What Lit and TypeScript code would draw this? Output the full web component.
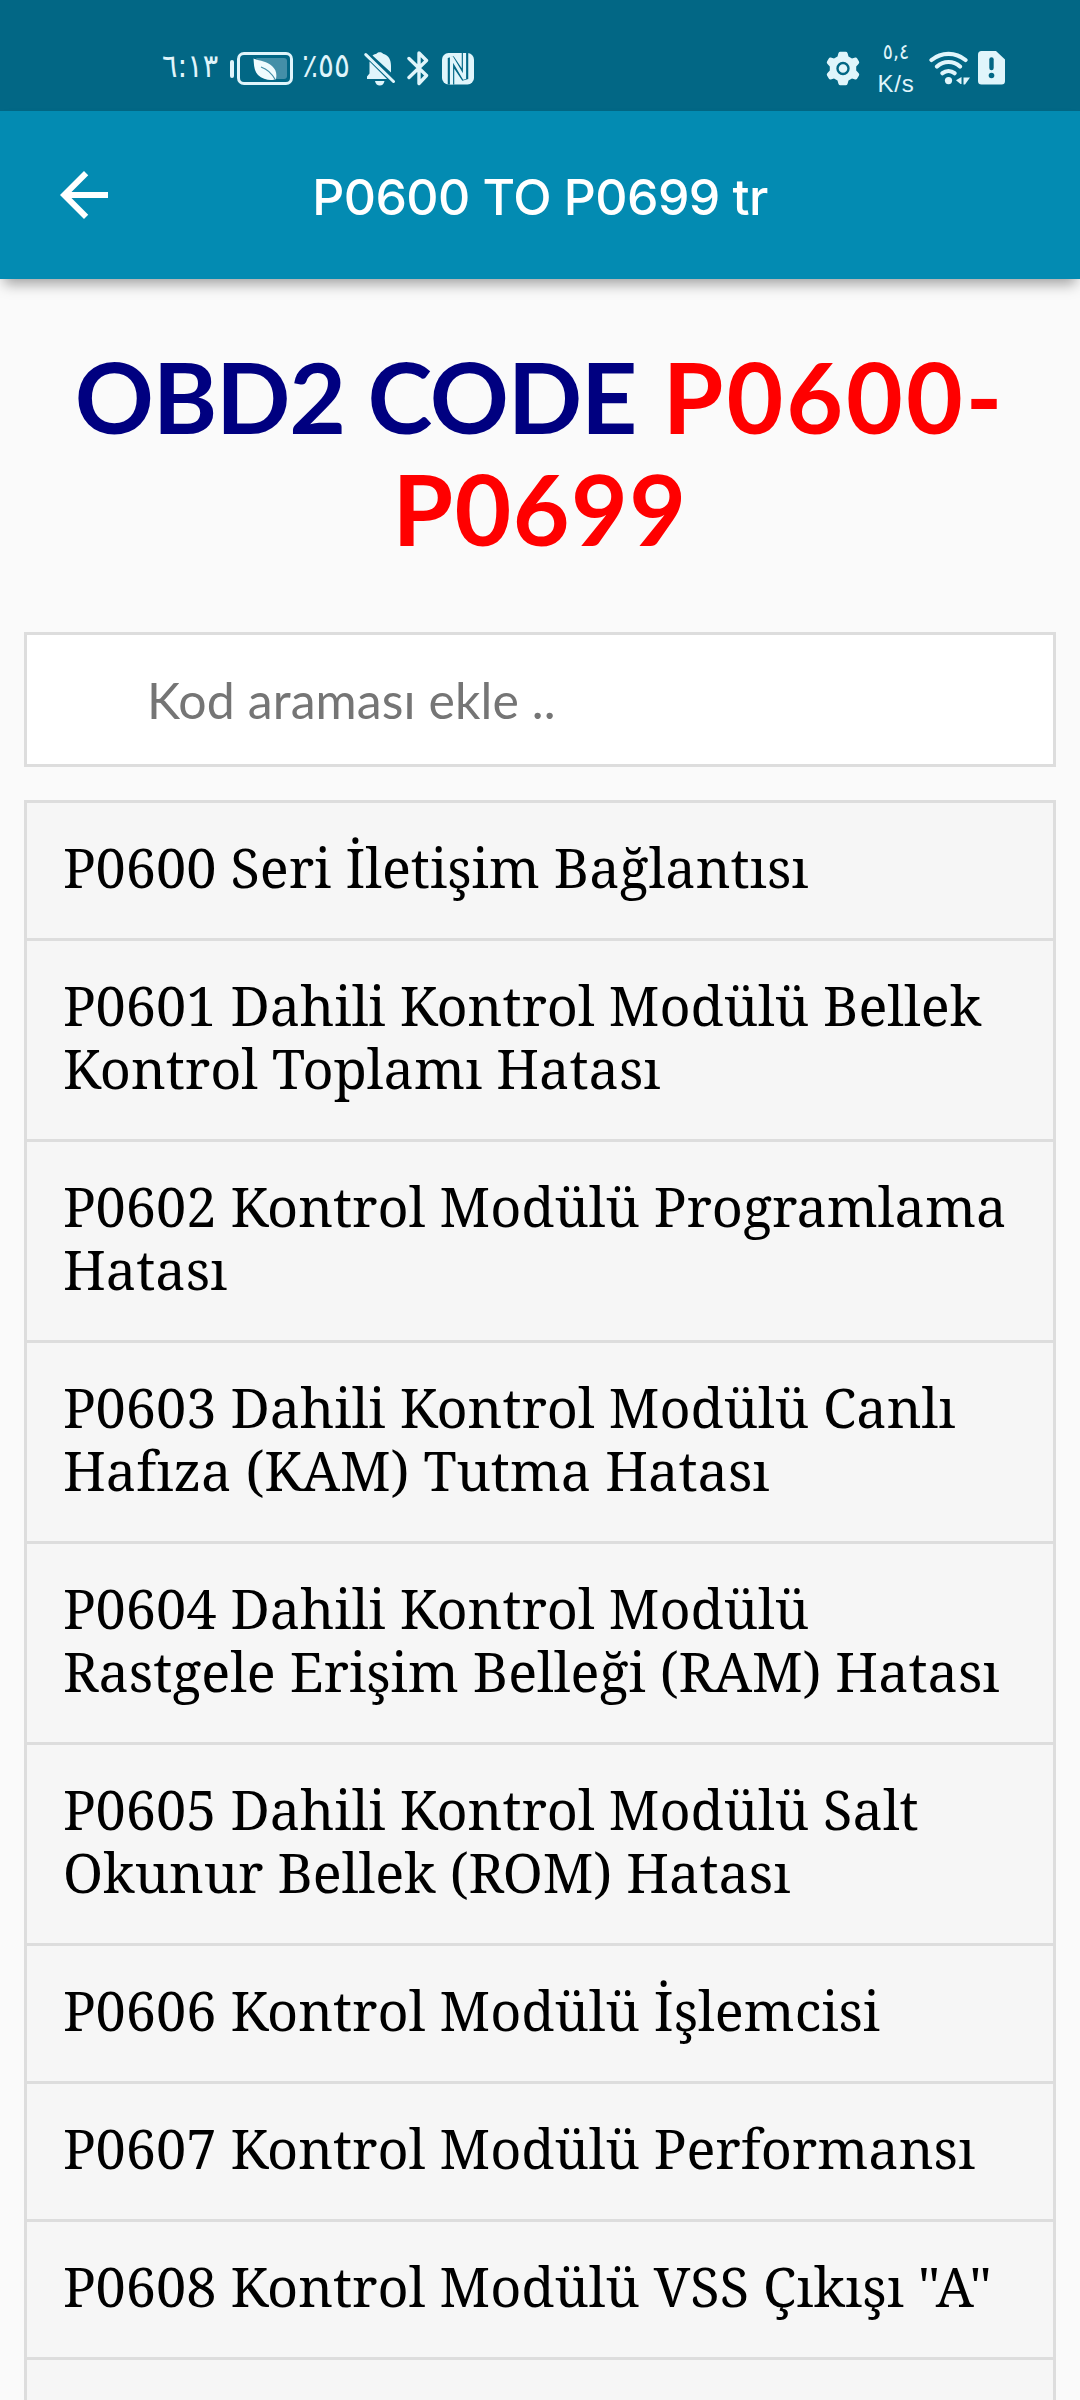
import { LitElement, html, css, svg } from "lit";
import { customElement } from "lit/decorators.js";

const codes: string[] = [
  "P0600 Seri İletişim Bağlantısı",
  "P0601 Dahili Kontrol Modülü Bellek Kontrol Toplamı Hatası",
  "P0602 Kontrol Modülü Programlama Hatası",
  "P0603 Dahili Kontrol Modülü Canlı Hafıza (KAM) Tutma Hatası",
  "P0604 Dahili Kontrol Modülü Rastgele Erişim Belleği (RAM) Hatası",
  "P0605 Dahili Kontrol Modülü Salt Okunur Bellek (ROM) Hatası",
  "P0606 Kontrol Modülü İşlemcisi",
  "P0607 Kontrol Modülü Performansı",
  "P0608 Kontrol Modülü VSS Çıkışı \"A\"",
  "",
];

const icon = (name: string, width: number, body: unknown) => html`
  <svg class=${name} width=${width} height="36" viewBox="0 0 ${width} 36" fill="none">${body}</svg>
`;

@customElement("status-bar")
class StatusBar extends LitElement {
  static styles = css`
    :host {
      display: flex;
      align-items: flex-start;
      box-sizing: border-box;
      height: 111px;
      padding: 51px 75px 0 162px;
      background: #026785;
      color: #e0f5fb;
      font-family: "DejaVu Sans Condensed", "DejaVu Sans", sans-serif;
    }
    svg {
      display: block;
      flex: none;
    }
    .text {
      display: flex;
      flex: none;
      height: 36px;
      line-height: 30px;
      white-space: nowrap;
      direction: ltr;
      unicode-bidi: bidi-override;
    }
    .time {
      width: 54px;
      font-size: 32px;
      letter-spacing: -0.5px;
    }
    .percent {
      width: 52px;
      font-size: 33px;
      margin-left: 8px;
    }
    .battery { margin-left: 14px; }
    .bell { margin-left: 10px; }
    .bluetooth { margin-left: 11px; }
    .nfc { margin-left: 13px; }
    .gear { margin-left: auto; }
    .speed {
      display: flex;
      flex-direction: column;
      align-items: center;
      width: 36px;
      margin: -15px 0 0 18px;
    }
    .rate {
      font-size: 21px;
      line-height: 32px;
      letter-spacing: -0.5px;
      unicode-bidi: bidi-override;
    }
    .unit {
      font: 24px/32px "Liberation Sans", sans-serif;
      letter-spacing: 0.8px;
    }
    .wifi { margin-left: 15px; }
    .sim { margin-left: 8px; }
  `;

  render() {
    return html`
      <span class="text time">٦:١٣</span>
      ${icon("battery", 64, svg`
        <rect x="0" y="9" width="4" height="18" rx="2" fill="#e0f5fb"/>
        <rect x="8.5" y="2.5" width="53" height="30" rx="5.5" stroke="#e0f5fb" stroke-width="3"/>
        <path d="M26 7H54Q57 7 57 10V25Q57 28 54 28H40Z" fill="#448fa8"/>
        <path d="M23.5 7.5C30 10 37 10 42 15C46 19 47 22 46 28C42 30 33 29 28 24C24 20 24 14 23.5 7.5Z" fill="#f0fbfe"/>
        <path d="M31 16Q40 19 45.500 29" stroke="#448fa8" stroke-width="1.300"/>
      `)}
      <span class="text percent">٪٥٥</span>
      ${icon("bell", 32, svg`
        <path d="M8.500 4.500C10 3.300 11.500 3 12.500 2.800C13 .6 18.500 .6 19 2.800C25 4.500 27 9 27 15V21.500ZM5.500 10.500L23 28H3V25.500L5.500 22.500Z" fill="#e0f5fb"/>
        <path d="M11 30H20.500Q19.500 34.500 15.800 34.500Q12 34.500 11 30Z" fill="#e0f5fb"/>
        <path d="M1.800 3.600L29.500 30.500" stroke="#e0f5fb" stroke-width="3" stroke-linecap="round"/>
      `)}
      ${icon("bluetooth", 22, svg`
        <path d="M2 7.500L19.500 24.500L12 32.500V2L19.500 9.500L2 26.500" stroke="#e0f5fb" stroke-width="3.400" stroke-linecap="round" stroke-linejoin="round"/>
      `)}
      ${icon("nfc", 32, svg`
        <rect x="0" y="2" width="32" height="31.500" rx="6.500" fill="#e0f5fb"/>
        <path d="M9 33.500V7L23 28V2" stroke="#026785" stroke-width="6.500" stroke-linejoin="bevel"/>
        <path d="M9.500 33.500V6L22.500 28V2" stroke="#e0f5fb" stroke-width="3.200" stroke-linejoin="bevel"/>
      `)}
      ${icon("gear", 34, svg`
        <path d="M12.500 2Q13 .8 14.300 .8H19.700Q21 .8 21.500 2L22.500 5.500L26 7.500L29.200 6.600Q30.500 6.300 31.200 7.400L33 10.600Q33.600 11.700 32.700 12.700L30.200 15.400V19.600L32.700 22.300Q33.600 23.300 33 24.400L31.200 27.600Q30.500 28.700 29.200 28.400L26 27.500L22.500 29.500L21.500 33Q21 34.200 19.700 34.200H14.300Q13 34.200 12.500 33L11.500 29.500L8 27.500L4.800 28.400Q3.500 28.700 2.800 27.600L1 24.400Q.4 23.300 1.300 22.300L3.800 19.600V15.400L1.300 12.700Q.4 11.700 1 10.600L2.800 7.400Q3.500 6.300 4.800 6.600L8 7.500L11.500 5.500Z" fill="#e0f5fb"/>
        <circle cx="17" cy="17.500" r="5.500" stroke="#026785" stroke-width="2.400"/>
      `)}
      <span class="speed"><span class="rate">٥,٤</span><span class="unit">K/s</span></span>
      ${icon("wifi", 41, svg`
        <path d="M2.500 9A26.500 26.500 0 0 1 36.500 9M8 15.500A17 17 0 0 1 31 15.500M13.500 22.200A9.500 9.500 0 0 1 25.500 22.200" stroke="#e0f5fb" stroke-width="4.200" stroke-linecap="round"/>
        <circle cx="19.500" cy="29.600" r="3.600" fill="#e0f5fb"/>
        <path d="M32.500 26V33H31.500L27 29.200ZM34.500 26.500H41L36 33.500H34.500Z" fill="#e0f5fb"/>
      `)}
      ${icon("sim", 27, svg`
        <path d="M3.500 0H18L27 8.500V30Q27 33.500 23.500 33.500H3.500Q0 33.500 0 30V3.500Q0 0 3.500 0Z" fill="#e0f5fb"/>
        <path d="M13.500 8.500V17" stroke="#026785" stroke-width="4.400" stroke-linecap="round"/>
        <circle cx="13.500" cy="24.500" r="2.800" fill="#026785"/>
      `)}
    `;
  }
}

@customElement("app-header")
class AppHeader extends LitElement {
  static styles = css`
    :host {
      display: grid;
      grid-template-columns: 72px 1fr 72px;
      align-items: center;
      box-sizing: border-box;
      height: 168px;
      padding: 0 48px;
      background: #038bb2;
      color: #fff;
      box-shadow: 0 9px 13px -4px rgba(0, 0, 0, 0.36);
    }
    svg { display: block; }
    .title {
      text-align: center;
      font: 500 50px/60px Inter, sans-serif;
      letter-spacing: -0.55px;
      padding-top: 3px;
    }
  `;

  render() {
    return html`
      <svg width="72" height="72" viewBox="0 0 24 24" fill="#fff">
        <path d="M20 11H7.830l5.590-5.590L12 4l-8 8 8 8 1.410-1.410L7.830 13H20z"/>
      </svg>
      <span class="title">P0600 TO P0699 tr</span>
    `;
  }
}

@customElement("app-root")
class AppRoot extends LitElement {
  static styles = css`
    :host {
      display: block;
      height: 2400px;
      overflow: hidden;
      background: #fafafa;
    }
    .content {
      display: flex;
      flex-direction: column;
      padding: 61px 24px 0;
    }
    h1 {
      margin: 0;
      text-align: center;
      font: bold 98px/112px Lato, sans-serif;
      color: navy;
      letter-spacing: -1.2px;
      height: 292px;
    }
    .range {
      color: red;
      letter-spacing: 3px;
      margin-left: 4px;
    }
    .range-end {
      color: red;
      letter-spacing: 1.4px;
    }
    .search {
      box-sizing: border-box;
      height: 135px;
      padding: 0 36px 0 120px;
      border: 3px solid #ddd;
      border-radius: 0;
      background: #fff;
      font: 50px Lato, sans-serif;
      letter-spacing: 0.1px;
      outline: none;
    }
    .search::placeholder {
      color: #757575;
      opacity: 1;
    }
    ul {
      list-style: none;
      margin: 33px 0 0;
      padding: 0;
    }
    li {
      border: 3px solid #ddd;
      margin-bottom: -3px;
      padding: 33px 36px 39px;
      background: #f6f6f6;
      color: #000;
      font: 54px/63px "Noto Serif", "DejaVu Serif Condensed", serif;
      min-height: 63px;
    }
  `;

  render() {
    return html`
      <status-bar></status-bar>
      <app-header></app-header>
      <div class="content">
        <h1>OBD2 CODE <span class="range">P0600-</span><br><span class="range-end">P0699</span></h1>
        <input class="search" placeholder="Kod araması ekle ..">
        <ul>${codes.map((code) => html`<li>${code}</li>`)}</ul>
      </div>
    `;
  }
}
